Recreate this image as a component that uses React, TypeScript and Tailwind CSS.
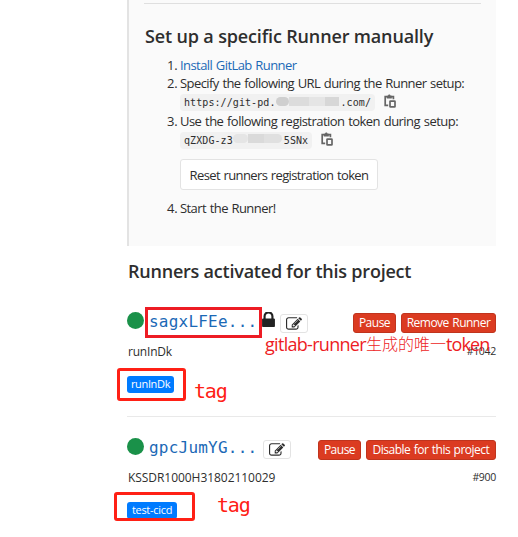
import type { ReactNode } from "react";

const ui = "font-['Open_Sans','Noto_Sans',sans-serif]";
const mono = "font-['DejaVu_Sans_Mono',monospace]";

function CopyIcon() {
  return (
    <svg viewBox="0 0 12 14" className="block h-[14px] w-3 shrink-0" fill="none" stroke="#666" strokeWidth="1.7">
      <path d="M4.2 11.4H1.2V2.7H9.4V5.2" />
      <path d="M2.8 4.4V1.8H4C4.3 0 6.3 0 6.6 1.8H7.8V4.4Z" fill="#666" stroke="none" />
      <rect x="6" y="7.1" width="5" height="5.8" rx=".5" />
    </svg>
  );
}

function EditButton() {
  return (
    <span className="flex h-[19px] w-7 shrink-0 items-center justify-center rounded-[3px] border border-[#e3e3e3] bg-white">
      <svg viewBox="0 0 1792 1792" className="h-4 w-4" fill="#2e2e2e">
        <path d="M888 1184l116-116-152-152-116 116v56h96v96h56zm440-720q-16-16-33 1l-350 350q-17 17-1 33t33-1l350-350q17-17 1-33zm80 594v190q0 119-84.5 203.5t-203.5 84.5h-832q-119 0-203.5-84.5t-84.5-203.5v-832q0-119 84.5-203.5t203.5-84.5h832q63 0 117 25 15 7 18 23 3 17-9 29l-49 49q-14 14-32 8-23-6-45-6h-832q-66 0-113 47t-47 113v832q0 66 47 113t113 47h832q66 0 113-47t47-113v-126q0-13 9-22l64-64q15-15 35-7t20 29zm-96-738l288 288-672 672h-288v-288zm444 132l-92 92-288-288 92-92q28-28 68-28t68 28l152 152q28 28 28 68t-28 68z" />
      </svg>
    </span>
  );
}

function LockIcon() {
  return (
    <svg viewBox="320 192 1152 1344" className="h-[15px] w-[13px] shrink-0" fill="#222">
      <path d="M640 768h512v-192q0-106-75-181t-181-75-181 75-75 181v192zm832 96v576q0 40-28 68t-68 28h-960q-40 0-68-28t-28-68v-576q0-40 28-68t68-28h32v-192q0-184 132-316t316-132 316 132 132 316v192h32q40 0 68 28t28 68z" />
    </svg>
  );
}

function DangerButton({ className, children }: { className: string; children: ReactNode }) {
  return (
    <button
      className={`flex h-5 shrink-0 items-center justify-center rounded-[3px] border border-[#c0341d] bg-[#db3b21] text-[12px] tracking-[-0.5px] whitespace-nowrap text-white [word-spacing:0.8px] ${className}`}
    >
      {children}
    </button>
  );
}

function Step({ n, children }: { n: number; children: ReactNode }) {
  return (
    <div className="flex h-[18px] items-center pt-[2px] text-[13px] tracking-[-0.57px] whitespace-nowrap [word-spacing:0.8px]">
      <span className="w-[13px] shrink-0 tracking-[-0.2px]">{n}.</span>
      {children}
    </div>
  );
}

export default function App() {
  return (
    <div className={`relative h-[537px] w-[518px] overflow-hidden bg-white text-[#2e2e2e] ${ui}`}>
      <section className="ml-[127px] h-[246px] w-[369px] border-l-2 border-[#e3e3e3] bg-[#fafafa] pt-[3px] pr-[15px] pl-[15px]">
        <div className="h-px bg-[#dfdfdf]" />
        <h2 className="mt-[20px] ml-px flex h-6 items-center text-[18px] font-semibold tracking-[-0.15px] whitespace-nowrap">
          Set up a specific Runner manually
        </h2>
        <div className="mt-[8px] pl-[23px]">
          <Step n={1}>
            <a className="text-[#1b69b6]">Install GitLab Runner</a>
          </Step>
          <Step n={2}>
            <span>Specify the following URL during the Runner setup:</span>
          </Step>
          <div className="ml-[13px] flex h-5 items-center">
            <code className={`flex h-[17px] w-[195px] items-center rounded bg-[#f1f1f1] pl-1 text-[10px] tracking-[0.08px] ${mono}`}>
              https://git-pd.
              <span className="mb-px flex h-[9px] w-[65px]">
                <span className="h-[9px] w-[13px] rounded-full bg-[#cfcfcf]" />
                <span className="h-[9px] w-[20px] bg-[#dcdcdc]" />
                <span className="h-[9px] w-[16px] bg-[#e5e5e5]" />
                <span className="h-[9px] w-[14px] bg-[#d7d7d7]" />
              </span>
              .com/
            </code>
            <span className="ml-[9px] pb-[2px]"><CopyIcon /></span>
          </div>
          <Step n={3}>
            <span className="tracking-[-0.53px]">Use the following registration token during setup:</span>
          </Step>
          <div className="ml-[13px] flex h-5 items-center">
            <code className={`flex h-[17px] w-[132px] items-center rounded bg-[#f1f1f1] pl-1 text-[10px] tracking-[0.08px] ${mono}`}>
              qZXDG-z3
              <span className="mb-1 flex h-[9px] w-[51px]">
                <span className="h-[9px] w-[15px] rounded-full bg-[#e5e5e5]" />
                <span className="h-[9px] w-[16px] bg-[#dadada]" />
                <span className="h-[9px] w-[18px] rounded-r-full bg-[#e0e0e0]" />
              </span>
              5SNx
            </code>
            <span className="ml-[9px] pb-[2px]"><CopyIcon /></span>
          </div>
          <button className="mt-[9px] ml-[13px] flex h-[31px] w-[198px] items-center justify-center rounded-[3px] border border-[#e3e3e3] bg-white pt-[2px] text-[13px] tracking-[-0.62px] whitespace-nowrap [word-spacing:0.8px]">
            Reset runners registration token
          </button>
          <div className="mt-[9px]">
            <Step n={4}>
              <span>Start the Runner!</span>
            </Step>
          </div>
        </div>
      </section>

      <main className="ml-[127px] w-[369px]">
        <h2 className="mt-[13px] flex h-6 items-center pt-px pl-px text-[18px] font-semibold tracking-[-0.22px] whitespace-nowrap">
          Runners activated for this project
        </h2>

        <div className="mt-6 flex h-[31px] items-center">
          <span className="mb-[5px] h-[17px] w-[17px] shrink-0 rounded-full bg-[#1a9149]" />
          <a className={`ml-px flex h-[31px] w-[117px] items-center border-3 border-[#ed1c24] pb-px pl-[1px] text-[16px] tracking-[0.22px] text-[#1b69b6] ${mono}`}>
            sagxLFEe...
          </a>
          <span className="mb-[6px]"><LockIcon /></span>
          <span className="ml-[5px] pt-[2px]"><EditButton /></span>
          <DangerButton className="ml-auto w-[43px]">Pause</DangerButton>
          <DangerButton className="ml-[5px] w-[95px]">Remove Runner</DangerButton>
        </div>
        <div className="mt-1 flex h-5 items-center justify-between text-[12px]">
          <span className="pl-px tracking-[-0.2px]">runInDk</span>
          <span className="text-[10.5px] tracking-[-0.3px]">#1042</span>
        </div>
        <div className="mt-[14px] flex h-[17px] w-[47px] items-center justify-center rounded-[3px] bg-[#007bff] text-[11px] tracking-[-0.35px] text-white">
          runInDk
        </div>

        <div className="mt-[23px] h-px bg-[#e9e9e9]" />
        <div className="mt-[17px] flex h-[31px] items-center">
          <span className="mb-[7px] h-[17px] w-[17px] shrink-0 rounded-full bg-[#1a9149]" />
          <a className={`ml-[5px] w-[114px] pb-[4px] text-[16px] tracking-[0.22px] text-[#1b69b6] ${mono}`}>gpcJumYG...</a>
          <EditButton />
          <DangerButton className="ml-auto w-[43px]">Pause</DangerButton>
          <DangerButton className="ml-[5px] w-[130px]">Disable for this project</DangerButton>
        </div>
        <div className="mt-[3px] flex h-5 items-center justify-between text-[12px]">
          <span className="pl-px tracking-[-0.05px]">KSSDR1000H31802110029</span>
          <span className="text-[10.5px] tracking-[-0.3px]">#900</span>
        </div>
        <div className="mt-[14px] flex h-[17px] w-[50px] items-center justify-center rounded-[3px] bg-[#007bff] text-[11px] tracking-[-0.3px] text-white">
          test-cicd
        </div>
      </main>

      <div className="absolute top-[332px] left-[265px] flex h-6 items-center text-[18px] whitespace-nowrap text-[#ed1c24] font-['Open_Sans','Noto_Sans_CJK_SC',sans-serif]">
        <span className="w-[101px] tracking-[-0.7px]">gitlab-runner</span>
        <span className="w-[80px] text-[16px] font-light">生成的唯一</span>
        <span className="tracking-[-0.9px]">token</span>
      </div>
      <div className="absolute top-[368px] left-[117px] h-[33px] w-[69px] rounded-[3px] border-3 border-[#ff2015]" />
      <div className={`absolute top-[379px] left-[194px] text-[20px] leading-6 tracking-[-1.2px] text-[#ff2015] ${mono}`}>tag</div>
      <div className="absolute top-[492px] left-[114px] h-[29px] w-[81px] rounded-[3px] border-3 border-[#ff2015]" />
      <div className={`absolute top-[493px] left-[217px] text-[20px] leading-6 tracking-[-1.2px] text-[#ff2015] ${mono}`}>tag</div>
    </div>
  );
}
